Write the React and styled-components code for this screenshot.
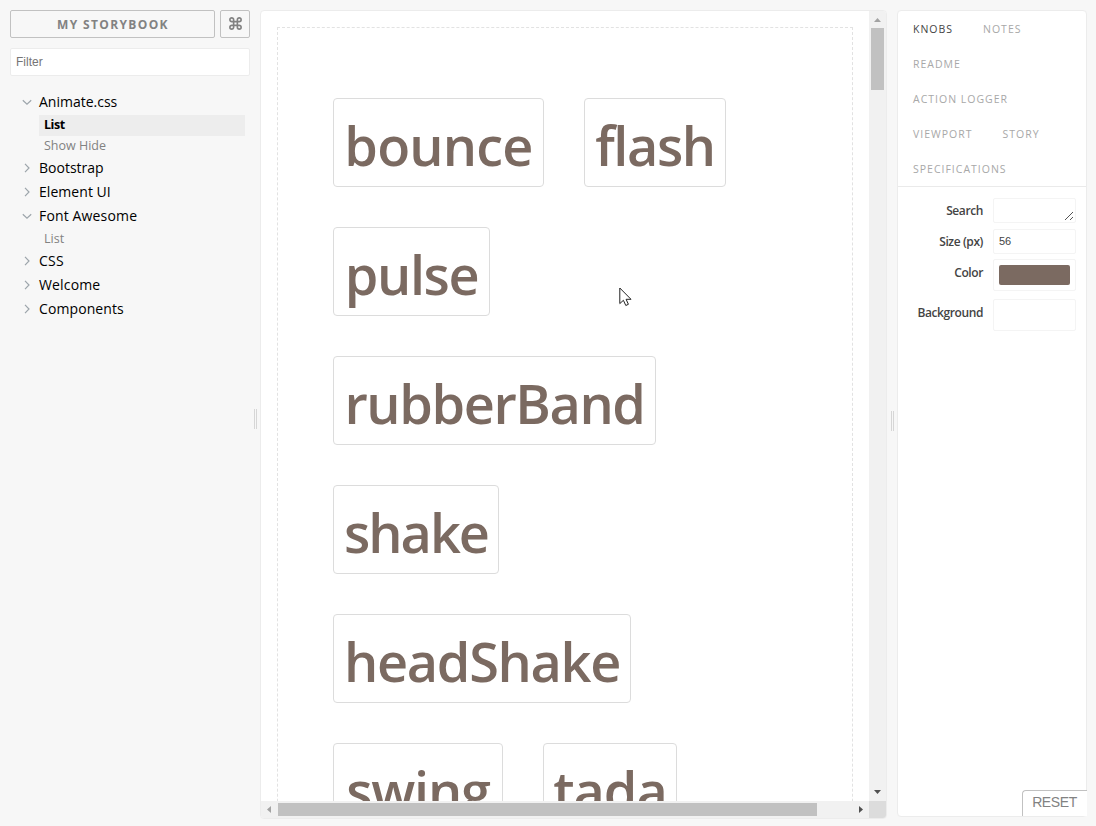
import React from "react";
import styled, { createGlobalStyle } from "styled-components";

const GlobalStyle = createGlobalStyle`
  * { box-sizing: border-box; }
  body {
    margin: 0;
    background: #f7f7f7;
    font-family: "Open Sans", "Noto Sans", sans-serif;
    overflow: hidden;
  }
`;

const Page = styled.div`
  display: flex;
  width: 1096px;
  height: 826px;
  overflow: hidden;
`;

const Sidebar = styled.aside`
  width: 250px;
  padding: 10px 0 0 10px;
`;

const Header = styled.div`
  display: flex;
  gap: 5px;
  height: 28px;
`;

const HeaderButton = styled.button`
  display: flex;
  align-items: center;
  justify-content: center;
  width: ${(p) => p.$width}px;
  height: 28px;
  padding: 0 0 ${(p) => p.$lift || 0}px ${(p) => p.$shift || 0}px;
  border: 1px solid #c1c1c1;
  border-radius: 2px;
  background: transparent;
  color: #828282;
  font: 700 12px "Open Sans", sans-serif;
  letter-spacing: 1.35px;
`;

const FilterInput = styled.input`
  display: block;
  width: 240px;
  height: 28px;
  margin-top: 10px;
  padding: 0 5px 1px;
  border: 1px solid #ececec;
  border-radius: 2px;
  background: #fff;
  font: 12px "Liberation Sans", Arial, sans-serif;
  outline: none;
  &::placeholder { color: #757575; }
`;

const Tree = styled.nav`
  padding: 14px 5px 0 10px;
`;

const Kind = styled.div`
  display: flex;
  align-items: center;
  height: 24px;
  color: #000;
  font-size: 14px;
  line-height: 24px;
  white-space: nowrap;
  letter-spacing: ${(p) => p.$ls}px;
`;

const Arrow = styled.svg`
  width: 12px;
  height: 12px;
  margin: 0 6px 0 1px;
  fill: none;
  stroke: #9da5ab;
  stroke-width: 1.2;
`;

const Stories = styled.div`
  position: relative;
  top: 1px;
  margin-left: 19px;
`;

const Story = styled.div`
  height: 21px;
  padding-left: 5px;
  line-height: 20px;
  font-size: 12.5px;
  letter-spacing: ${(p) => (p.$active ? -0.45 : 0)}px;
  font-weight: ${(p) => (p.$active ? 700 : 400)};
  color: ${(p) => (p.$active ? "#000" : "#828282")};
  background: ${(p) => (p.$active ? "#ededed" : "transparent")};
`;

const Splitter = styled.div`
  display: flex;
  justify-content: center;
  gap: 1px;
  width: ${(p) => p.$width}px;
  padding-top: ${(p) => p.$top}px;
  &::before, &::after {
    content: "";
    width: 1px;
    height: 20px;
    background: #d6d6d6;
  }
`;

const Preview = styled.main`
  display: grid;
  grid-template-columns: 608px 17px;
  grid-template-rows: 790px 17px;
  width: 627px;
  height: 809px;
  margin-top: 10px;
  border: 1px solid #ececec;
  border-radius: 4px;
  overflow: hidden;
  background: #fff;
`;

const Viewport = styled.div`
  padding: 16px 16px 0;
  overflow: hidden;
`;

const Canvas = styled.div`
  display: flex;
  flex-wrap: wrap;
  align-content: flex-start;
  gap: 40px;
  height: 900px;
  padding: 70px 55px 0;
  border: 1px dashed #e2e2e2;
`;

const Sample = styled.div`
  display: flex;
  justify-content: center;
  width: ${(p) => p.$width}px;
  height: 89px;
  border: 1px solid #dcdcdc;
  border-radius: 4px;
  color: #7b6a61;
  font-size: 54px;
  font-weight: 600;
  line-height: 92px;
  letter-spacing: ${(p) => p.$ls}px;
  white-space: nowrap;
`;

const Scrollbar = styled.div`
  display: flex;
  flex-direction: ${(p) => (p.$vertical ? "column" : "row")};
  justify-content: space-between;
  background: #f1f1f1;
`;

const ScrollArrow = styled.svg`
  width: 17px;
  height: 17px;
  flex: none;
  fill: ${(p) => (p.$dim ? "#a3a3a3" : "#505050")};
`;

const Track = styled.div`
  flex: 1;
  padding: ${(p) => (p.$vertical ? "0 2px" : "2px 0")};
`;

const Thumb = styled.div`
  width: ${(p) => p.$w};
  height: ${(p) => p.$h};
  background: #c1c1c1;
`;

const Corner = styled.div`
  background: #dcdcdc;
`;

const Panel = styled.aside`
  display: flex;
  flex-direction: column;
  width: 190px;
  height: 807px;
  margin-top: 10px;
  border: 1px solid #ececec;
  border-radius: 4px;
  background: #fff;
`;

const Tabs = styled.div`
  display: flex;
  flex-wrap: wrap;
  height: 176px;
  border-bottom: 1px solid #eaeaea;
`;

const Tab = styled.a`
  height: 35px;
  padding: 0 15px;
  line-height: 36px;
  font-size: 10.5px;
  letter-spacing: 1px;
  white-space: nowrap;
  color: ${(p) => (p.$active ? "#444" : "#a8a8a8")};
`;

const Knobs = styled.div`
  flex: 1;
  padding: 11px 10px 0 10px;
`;

const KnobRow = styled.label`
  display: flex;
  justify-content: space-between;
  margin-bottom: ${(p) => p.$gap}px;
`;

const KnobLabel = styled.span`
  width: 75px;
  text-align: right;
  color: #444;
  font-size: 12px;
  font-weight: 600;
  line-height: ${(p) => (p.$tall ? 27 : 25)}px;
  letter-spacing: -0.4px;
  white-space: nowrap;
`;

const Field = styled.div`
  display: flex;
  width: 83px;
  height: ${(p) => p.$h}px;
  padding: 5px;
  border: 1px solid #f4f4f4;
  border-radius: 2px;
  color: #444;
  font: 11px/13px "Liberation Sans", Arial, sans-serif;
`;

const Grip = styled.svg`
  width: 11px;
  height: 11px;
  margin: 7px -5px 0 auto;
  stroke: #555;
  fill: none;
`;

const Swatch = styled.div`
  width: 71px;
  height: 20px;
  border-radius: 2px;
  background: #7b6a61;
`;

const Reset = styled.button`
  align-self: flex-end;
  width: 65px;
  height: 26px;
  margin-right: -1px;
  padding: 0 1px 2px 0;
  border: 1px solid #c1c1c1;
  border-width: 1px 0 0 1px;
  border-radius: 4px 0 0 0;
  background: #fff;
  color: #828282;
  font: 14px/23px "Liberation Sans", Arial, sans-serif;
  letter-spacing: -0.4px;
`;

const Cursor = styled.svg`
  position: absolute;
  left: 619px;
  top: 286.5px;
  width: 13px;
  height: 20px;
`;

const kinds = [
  { name: "Animate.css", stories: ["List", "Show Hide"], active: "List", ls: 0 },
  { name: "Bootstrap", ls: 0 },
  { name: "Element UI", ls: 0.05 },
  { name: "Font Awesome", stories: ["List"], ls: 0.15 },
  { name: "CSS", ls: 0.3 },
  { name: "Welcome", ls: 0.15 },
  { name: "Components", ls: 0.1 },
];

const samples = [
  ["bounce", 211, -0.8],
  ["flash", 142, -1.4],
  ["pulse", 157, -1.4],
  ["rubberBand", 323, -1.4],
  ["shake", 166, -2],
  ["headShake", 298, -1.3],
  ["swing", 170, -1.2],
  ["tada", 134, -1],
];

const tabs = ["KNOBS", "NOTES", "README", "ACTION LOGGER", "VIEWPORT", "STORY", "SPECIFICATIONS"];

export default function App() {
  return (
    <Page>
      <GlobalStyle />
      <Sidebar>
        <Header>
          <HeaderButton $width={205} $shift={1}>MY STORYBOOK</HeaderButton>
          <HeaderButton $width={30} $lift={1}>
            <svg width="15" height="15" viewBox="0 0 24 24" fill="none" stroke="#828282" strokeWidth="2.6">
              <path d="M18 3a3 3 0 0 0-3 3v12a3 3 0 1 0 3-3H6a3 3 0 1 0 3 3V6a3 3 0 1 0-3 3h12a3 3 0 0 0 0-6z" />
            </svg>
          </HeaderButton>
        </Header>
        <FilterInput placeholder="Filter" />
        <Tree>
          {kinds.map((k) => (
            <div key={k.name}>
              <Kind $ls={k.ls}>
                <Arrow viewBox="0 0 12 12">
                  <path d={k.stories ? "M1.8 4.2 6 8.2 10.2 4.2" : "M4 1.8 8 6 4 10.2"} />
                </Arrow>
                {k.name}
              </Kind>
              {k.stories && (
                <Stories>
                  {k.stories.map((s) => (
                    <Story key={s} $active={s === k.active}>{s}</Story>
                  ))}
                </Stories>
              )}
            </div>
          ))}
        </Tree>
      </Sidebar>
      <Splitter $width={10} $top={409} />
      <Preview>
        <Viewport>
          <Canvas>
            {samples.map(([name, width, ls]) => (
              <Sample key={name} $width={width} $ls={ls}>{name}</Sample>
            ))}
          </Canvas>
        </Viewport>
        <Scrollbar $vertical>
          <ScrollArrow $dim><path d="M5 11h7L8.5 7z" /></ScrollArrow>
          <Track $vertical><Thumb $w="13px" $h="62px" /></Track>
          <ScrollArrow><path d="M5 6h7L8.5 10z" /></ScrollArrow>
        </Scrollbar>
        <Scrollbar>
          <ScrollArrow $dim><path d="M10 5v7L6 8.5z" /></ScrollArrow>
          <Track><Thumb $w="539px" $h="13px" /></Track>
          <ScrollArrow><path d="M7 5v7L11 8.5z" /></ScrollArrow>
        </Scrollbar>
        <Corner />
      </Preview>
      <Splitter $width={10} $top={411} />
      <Panel>
        <Tabs>
          {tabs.map((t, i) => <Tab key={t} $active={i === 0}>{t}</Tab>)}
        </Tabs>
        <Knobs>
          <KnobRow $gap={6}>
            <KnobLabel>Search</KnobLabel>
            <Field $h={25}>
              <Grip viewBox="0 0 11 11"><path d="M1 9 9 1M6 9 9 6" /></Grip>
            </Field>
          </KnobRow>
          <KnobRow $gap={5}>
            <KnobLabel>Size (px)</KnobLabel>
            <Field $h={25}>56</Field>
          </KnobRow>
          <KnobRow $gap={8}>
            <KnobLabel $tall>Color</KnobLabel>
            <Field $h={32}><Swatch /></Field>
          </KnobRow>
          <KnobRow $gap={0}>
            <KnobLabel $tall>Background</KnobLabel>
            <Field $h={32} />
          </KnobRow>
        </Knobs>
        <Reset>RESET</Reset>
      </Panel>
      <Cursor viewBox="0 0 13 20">
        <path d="M.8 1v15.6l3.6-3.3 2.4 5.2 2.6-1.2-2.3-5h4.9z" fill="#fff" stroke="#222" />
      </Cursor>
    </Page>
  );
}
